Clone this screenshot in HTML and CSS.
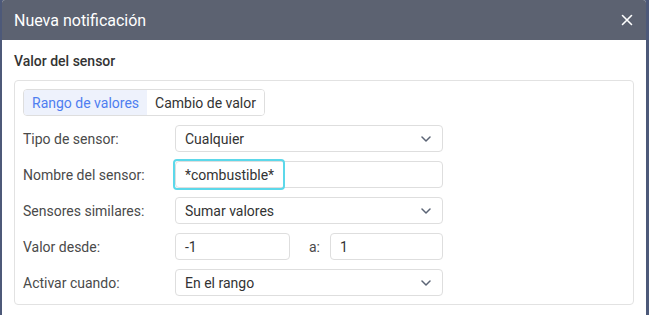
FILE: index.html
```html
<!DOCTYPE html>
<html lang="es">
<head>
<meta charset="utf-8">
<title>Nueva notificación</title>
<link rel="stylesheet" href="styles.css">
</head>
<body>
<div class="modal">
  <div class="modal-header">
    <span class="modal-title">Nueva notificación</span>
    <span class="close" aria-label="Cerrar">
      <svg width="12" height="12" viewBox="0 0 12 12"><path d="M1.5 1.5 L10.5 10.5 M10.5 1.5 L1.5 10.5" stroke="#fff" stroke-width="1.6" stroke-linecap="round"/></svg>
    </span>
  </div>
  <div class="modal-body">
    <div class="section-title">Valor del sensor</div>
    <div class="panel">
      <div class="tabs">
        <div class="tab active">Rango de valores</div>
        <div class="tab">Cambio de valor</div>
      </div>
      <div class="row">
        <label class="label">Tipo de sensor:</label>
        <div class="field select">Cualquier<span class="chev"><svg width="10" height="6" viewBox="0 0 10 6"><path d="M1 1 L5 5 L9 1" fill="none" stroke="#5b6475" stroke-width="1.5" stroke-linecap="round" stroke-linejoin="round"/></svg></span></div>
      </div>
      <div class="row">
        <label class="label">Nombre del sensor:</label>
        <div class="field text">*combustible*<span class="highlight"></span></div>
      </div>
      <div class="row">
        <label class="label">Sensores similares:</label>
        <div class="field select">Sumar valores<span class="chev"><svg width="10" height="6" viewBox="0 0 10 6"><path d="M1 1 L5 5 L9 1" fill="none" stroke="#5b6475" stroke-width="1.5" stroke-linecap="round" stroke-linejoin="round"/></svg></span></div>
      </div>
      <div class="row">
        <label class="label">Valor desde:</label>
        <div class="range">
          <div class="field small-a">-1</div>
          <span class="to">a:</span>
          <div class="field small-b">1</div>
        </div>
      </div>
      <div class="row">
        <label class="label">Activar cuando:</label>
        <div class="field select">En el rango<span class="chev"><svg width="10" height="6" viewBox="0 0 10 6"><path d="M1 1 L5 5 L9 1" fill="none" stroke="#5b6475" stroke-width="1.5" stroke-linecap="round" stroke-linejoin="round"/></svg></span></div>
      </div>
    </div>
  </div>
</div>
</body>
</html>
```
FILE: styles.css
```css
html, body {
  margin: 0;
  padding: 0;
  height: 100%;
}
body {
  background: #4d5979;
  font-family: Roboto, "Liberation Sans", Arial, sans-serif;
  overflow: hidden;
}
.modal {
  margin: 0 3px 0 2px;
  height: 100%;
  background: #fff;
  border-radius: 3px 3px 0 0;
  overflow: hidden;
}
.modal-header {
  height: 40px;
  background: #5c6271;
  display: flex;
  align-items: center;
  justify-content: space-between;
  padding: 0 12px 0 12px;
}
.modal-title {
  color: #fff;
  font-size: 16px;
  letter-spacing: 0;
}
.close {
  display: flex;
  align-items: center;
  margin-right: 1px;
}
.modal-body {
  padding: 13px 12px 0 12px;
}
.section-title {
  font-size: 14px;
  font-weight: 500;
  color: #333;
  line-height: 16px;
  margin-bottom: 11px;
}
.panel {
  border: 1px solid #e2e2e2;
  border-radius: 4px;
  padding: 8px 8px 8px 8px;
  display: flex;
  flex-direction: column;
  gap: 9px;
}
.tabs {
  display: flex;
  align-self: flex-start;
  border: 1px solid #dedede;
  border-radius: 4px;
  overflow: hidden;
  height: 25px;
}
.tab {
  font-size: 14px;
  color: #333;
  padding: 0 8px 0 8px;
  display: flex;
  align-items: center;
  background: #fff;
}
.tab.active {
  background: #eef2fc;
  color: #4f7ef0;
}
.row {
  display: flex;
  align-items: center;
  height: 27px;
}
.label {
  width: 152px;
  font-size: 14px;
  color: #4a4a4a;
}
.field {
  box-sizing: border-box;
  height: 27px;
  border: 1px solid #dedede;
  border-radius: 4px;
  font-size: 14px;
  color: #333;
  display: flex;
  align-items: center;
  padding: 0 9px;
  position: relative;
}
.select, .text {
  width: 268px;
}
.chev {
  position: absolute;
  right: 11px;
  top: 10px;
  display: flex;
}
.highlight {
  position: absolute;
  left: -3px;
  top: -3px;
  width: 112px;
  height: 31px;
  box-sizing: border-box;
  border: 2px solid #5cd8ea;
  border-radius: 4px;
}
.range {
  display: flex;
  align-items: center;
}
.small-a {
  width: 115px;
}
.small-b {
  width: 113px;
}
.to {
  box-sizing: border-box;
  width: 40px;
  text-align: right;
  padding-right: 10px;
  font-size: 14px;
  color: #4a4a4a;
}
```
